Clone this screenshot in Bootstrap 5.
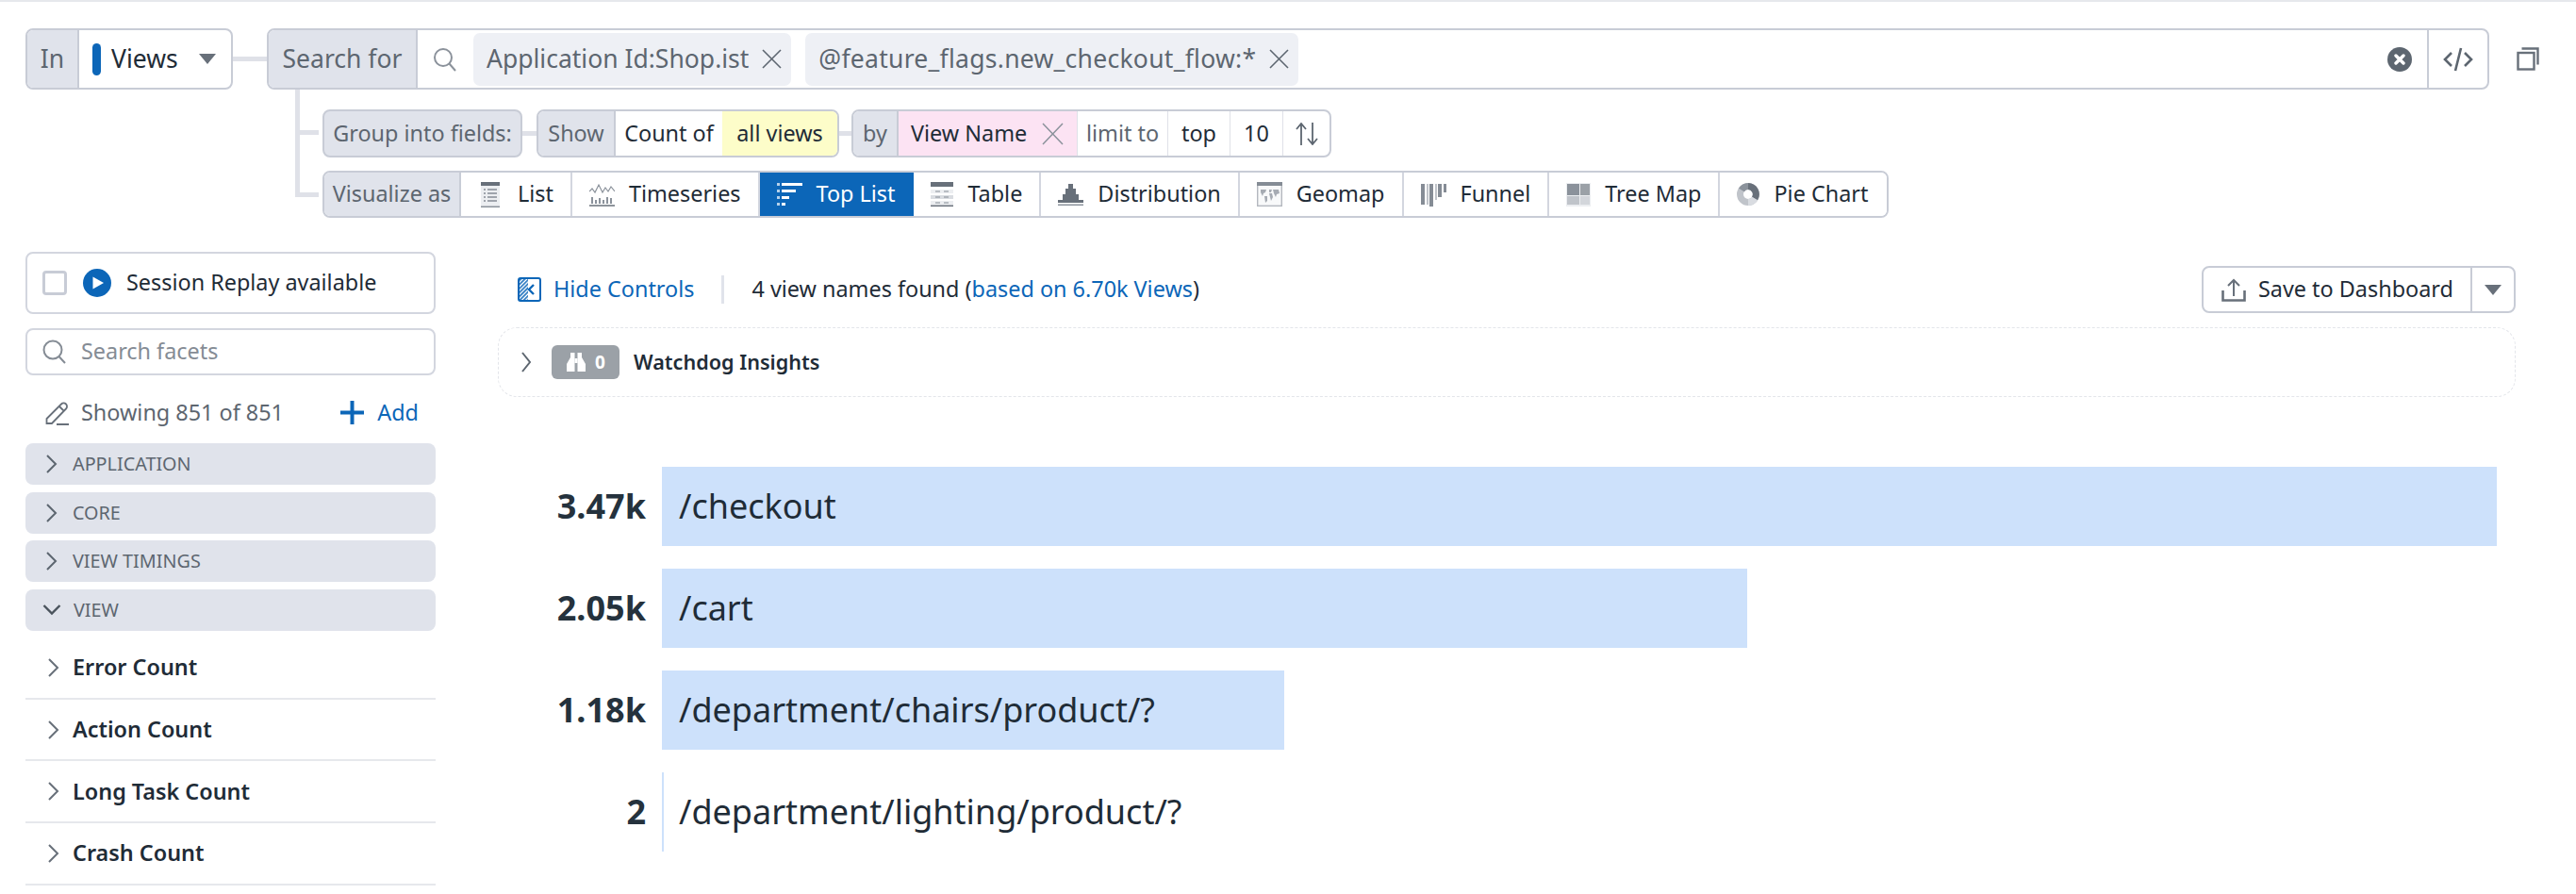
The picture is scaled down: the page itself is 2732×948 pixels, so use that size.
<!DOCTYPE html>
<html lang="en">
<head>
    <meta charset="UTF-8" />
    <title>Views Explorer</title>
    <link href="https://cdn.jsdelivr.net/npm/bootstrap@5.3.3/dist/css/bootstrap.min.css" rel="stylesheet" />
    <style>
        html, body { background: #fff; }
        body { font-family: "Noto Sans", sans-serif; font-size: 23.4px; color: #1f2c37; border-top: 2px solid #e6e8ec; width: 2732px; height: 946px; overflow: hidden; }
        a { text-decoration: none; color: #0c66b8; }
        svg { display: block; flex: none; }

        /* query builder */
        .query-wrap { padding: 28px 0 0 27px; }
        .query-row { height: 65px; font-size: 26.5px; }
        .seg { border: 2px solid #c8ccd6; border-radius: 8px; overflow: hidden; background: #fff; }
        .seg-label { background: #e0e3eb; color: #5d6670; border-right: 2px solid #c8ccd6; }
        .seg-in { width: 220px; height: 65px; }
        .seg-in .seg-label { width: 55px; }
        .view-dot { width: 9px; height: 34px; background: #0c66b8; border-radius: 5px; margin: 0 11px 0 14px; }
        .caret { width: 0; height: 0; border-left: 9.5px solid transparent; border-right: 9.5px solid transparent; border-top: 11px solid #68707a; }
        .hline { height: 5px; background: #dfe1e8; }
        .seg-search { width: 2357px; height: 65px; }
        .seg-search .seg-label { width: 158px; }
        .search-ico { margin: 0 17px 0 16px; }
        .pill { height: 56px; background: #eef0f5; border-radius: 7px; color: #5d6670; padding: 0 10px 0 14px; gap: 14px; }
        .pill + .pill { margin-left: 15px; letter-spacing: .27px; }
        .code-btn { width: 64px; border-left: 2px solid #c8ccd6; height: 100%; }

        .tree { margin-left: 286px; position: relative; }
        .tree-v { width: 5px; height: 114px; background: #dfe1e8; }
        .tree-rows { margin-left: 24px; padding-top: 21px; gap: 14px; }
        .group-row { height: 51px; position: relative; }
        .viz-row { height: 50px; }
        .stub { position: absolute; left: -24px; width: 20px; height: 5px; background: #dfe1e8; }
        .g-plain { border-left: 1px solid #dfe1e8; }
        .bg-flag { background: #fdfdc9; color: #1f2c37; }
        .bg-name { background: #fce3f3; }
        .muted-txt { color: #5d6670; }
        .viz-row .seg-label { width: 145px; height: 100%; }
        .viz-btn { font-size: 23.4px; border: 0; border-right: 2px solid #d3d6df; border-radius: 0; padding: 0 18px; gap: 15px; height: 100%; color: #1f2c37; display: flex; align-items: center; background: #fff; white-space: nowrap; }
        .viz-row .seg .btn-group > .btn.viz-btn { margin-left: 0; }
        .viz-btn:last-child { border-right: 0; padding-right: 20px; }
        .viz-btn.on { background: #0c66b8; color: #fff; border-color: #0c66b8; }

        /* page body */
        .page-cols { margin-top: 36px; padding-left: 27px; }
        .side { width: 435px; flex: none; }
        .replay-box { height: 66px; border: 2px solid #d3d6df; border-radius: 8px; padding-left: 16px; }
        .check-box { width: 26px; height: 26px; border: 3px solid #c8ccd6; border-radius: 4px; }
        .facet-search { height: 50px; border: 2px solid #d3d6df; border-radius: 8px; padding-left: 16px; margin-top: 15px; color: #858c95; gap: 16px; }
        .show-row { height: 36px; margin-top: 22px; padding: 0 18px 0 21px; color: #5d6670; margin-bottom: 14px; }
        .facet-head { height: 44px; background: #e0e3eb; border-radius: 8px; padding-left: 20px; font-size: 19.8px; color: #5d6670; margin-bottom: 7.5px; gap: 15px; }
        .facet-item { height: 65.7px; border-bottom: 2px solid #e6e8ec; padding-left: 22px; font-weight: 600; gap: 13px; }
        .main-col { width: 2140px; margin-left: 66px; flex: none; }
        .main-head { height: 50px; margin-top: 15px; }
        .v-sep { width: 3px; height: 30px; background: #e0e3eb; margin: 0 29px; }
        .save-btn { height: 50px; width: 333px; border: 2px solid #c8ccd6; border-radius: 8px; }
        .save-main { width: 283px; height: 100%; padding-left: 19px; gap: 13px; }
        .save-drop { flex: 1; height: 100%; border-left: 2px solid #c8ccd6; }
        .insights { height: 74px; margin-top: 15px; border: 1.5px dashed #e3e5ea; border-radius: 20px; padding-left: 23px; font-weight: 600; font-size: 21.6px; }
        .dog-badge { width: 72px; height: 36px; border-radius: 6px; background: #9ba1a7; color: #fff; margin: 0 15px 0 21px; font-size: 19px; font-weight: 700; gap: 9px; }

        .toplist { margin-top: 74px; gap: 24px; }
        .top-row { height: 84px; }
        .top-val { width: 157px; padding-right: 17px; text-align: right; font-size: 36px; font-weight: 700; color: #25323d; flex: none; margin-left: 17px; }
        .top-track { width: 1948px; height: 84px; position: relative; border-left: 2px solid #cde1fb; }
        .top-bar { background: #cde1fb; height: 100%; margin-left: -2px; }
        .top-name { position: absolute; left: 16px; top: 0; height: 84px; font-size: 36px; color: #1f2c37; }
    </style>
</head>
<body>
    <div class="query-wrap">
        <div class="query-row d-flex align-items-center">
            <div class="seg seg-in d-flex align-items-center">
                <div class="seg-label h-100 d-flex align-items-center justify-content-center">In</div>
                <div class="view-dot"></div>
                <div>Views</div>
                <div class="caret ms-auto me-3"></div>
            </div>
            <div class="hline" style="width: 36px"></div>
            <div class="seg seg-search d-flex align-items-center">
                <div class="seg-label h-100 d-flex align-items-center justify-content-center">Search for</div>
                <svg class="search-ico" width="26" height="26" viewBox="0 0 26 26" fill="none" stroke="#8b929b" stroke-width="2"><circle cx="11" cy="11" r="9"/><path d="M17.5 17.5 24 25"/></svg>
                <div class="pill d-flex align-items-center">Application Id:Shop.ist
                    <svg width="21" height="21" viewBox="0 0 21 21" stroke="#5d6670" stroke-width="1.6"><path d="M1 1l19 19M20 1 1 20"/></svg>
                </div>
                <div class="pill d-flex align-items-center">@feature_flags.new_checkout_flow:*
                    <svg width="21" height="21" viewBox="0 0 21 21" stroke="#5d6670" stroke-width="1.6"><path d="M1 1l19 19M20 1 1 20"/></svg>
                </div>
                <svg class="ms-auto" style="margin-right: 16px" width="26" height="26" viewBox="0 0 26 26"><circle cx="13" cy="13" r="13" fill="#5d6670"/><path d="M9 9l8 8M17 9l-8 8" stroke="#fff" stroke-width="3.4" stroke-linecap="round"/></svg>
                <div class="code-btn d-flex align-items-center justify-content-center">
                    <svg width="32" height="26" viewBox="0 0 32 26" fill="none" stroke="#5d6670" stroke-width="2.6"><path d="M9 6 2 13l7 7M23 6l7 7-7 7M19 1l-6 24"/></svg>
                </div>
            </div>
            <svg style="margin-left: 29px" width="24" height="25" viewBox="0 0 24 25" fill="none" stroke="#68707a" stroke-width="2.4"><rect x="1.5" y="6" width="17" height="17.5"/><path d="M5.5 1.5h17v17"/></svg>
        </div>

        <div class="tree d-flex">
            <div class="tree-v"></div>
            <div class="tree-rows d-flex flex-column">
                <div class="group-row d-flex align-items-center">
                    <span class="stub" style="top: 22px"></span>
                    <div class="seg d-flex align-items-center h-100 muted-txt" style="width: 212px; background: #e0e3eb">
                        <div class="w-100 text-center">Group into fields:</div>
                    </div>
                    <div class="hline" style="width: 15px"></div>
                    <div class="seg d-flex align-items-center h-100" style="width: 321px">
                        <div class="seg-label h-100 d-flex align-items-center justify-content-center" style="width: 82px">Show</div>
                        <div class="flex-grow-1 text-center">Count of</div>
                        <div class="bg-flag h-100 d-flex align-items-center justify-content-center" style="width: 122px">all views</div>
                    </div>
                    <div class="hline" style="width: 13px"></div>
                    <div class="seg d-flex align-items-center h-100" style="width: 509px">
                        <div class="seg-label h-100 d-flex align-items-center justify-content-center" style="width: 48px">by</div>
                        <div class="bg-name h-100 d-flex align-items-center justify-content-between" style="width: 189px; padding: 0 14px 0 13px">View Name
                            <svg width="23" height="24" viewBox="0 0 23 24" stroke="#8b929b" stroke-width="1.5"><path d="M1 1l21 22M22 1 1 23"/></svg>
                        </div>
                        <div class="g-plain h-100 d-flex align-items-center justify-content-center muted-txt" style="width: 96px">limit to</div>
                        <div class="g-plain h-100 d-flex align-items-center justify-content-center" style="width: 66px">top</div>
                        <div class="g-plain h-100 d-flex align-items-center justify-content-center" style="width: 56px">10</div>
                        <div class="g-plain h-100 flex-grow-1 d-flex align-items-center justify-content-center">
                            <svg width="26" height="24" viewBox="0 0 26 24" fill="none" stroke="#5d6670" stroke-width="1.8"><path d="M7 24V2M2 7l5-6 5 6M19 0v22M14 17l5 6 5-6"/></svg>
                        </div>
                    </div>
                </div>
                <div class="viz-row d-flex align-items-center position-relative">
                    <span class="stub" style="top: 23px"></span>
                    <div class="seg d-flex align-items-center h-100">
                        <div class="seg-label d-flex align-items-center justify-content-center">Visualize as</div>
                        <div class="btn-group h-100" role="group">
                            <button type="button" class="btn viz-btn" style="padding-left: 21px; gap: 19px">
                                <svg width="20" height="27" viewBox="0 0 20 27"><rect x="0" y="0" width="20" height="27" fill="#eceef1"/><rect x="0" y="0" width="20" height="4" fill="#68707a"/><rect x="0" y="25.5" width="20" height="1.5" fill="#8b929b"/><path d="M3 8h2M7 8h10M3 12h2M7 12h10M3 16h2M7 16h10M3 20h2M7 20h10" stroke="#858c95" stroke-width="1.4"/></svg>
                                List</button>
                            <button type="button" class="btn viz-btn">
                                <svg width="27" height="26" viewBox="0 0 27 26" fill="none"><path d="M0 10l3-3 3 4 4-8 4 8 3-5 3 4 3-5 4 5" stroke="#8b929b" stroke-width="1.2"/><path d="M3 16v7M7 19v4M11 17v6M15 19v4M19 16v7M23 17v6" stroke="#8b929b" stroke-width="2"/><path d="M0 25h27" stroke="#68707a" stroke-width="1.6"/></svg>
                                Timeseries</button>
                            <button type="button" class="btn viz-btn on">
                                <svg width="27" height="26" viewBox="0 0 27 26" fill="#fff"><rect x="0" y="1" width="3" height="3" opacity=".7"/><rect x="5" y="1" width="22" height="3"/><rect x="0" y="8" width="3" height="3" opacity=".7"/><rect x="5" y="8" width="15" height="3"/><rect x="0" y="15" width="3" height="3" opacity=".7"/><rect x="5" y="15" width="8" height="3"/><rect x="0" y="22" width="3" height="3" opacity=".7"/><rect x="5" y="22" width="4" height="3"/></svg>
                                Top List</button>
                            <button type="button" class="btn viz-btn">
                                <svg width="24" height="26" viewBox="0 0 24 26"><rect width="24" height="5" fill="#68707a"/><rect y="8" width="24" height="4" fill="#eceef1"/><rect y="14" width="24" height="4" fill="#d9dce1"/><rect y="20" width="24" height="4" fill="#eceef1"/><path d="M5 10h5M14 10h5M5 16h5M14 16h5M5 22h5M14 22h5" stroke="#858c95" stroke-width="1"/><rect y="24.500" width="24" height="1.500" fill="#68707a"/></svg>
                                Table</button>
                            <button type="button" class="btn viz-btn">
                                <svg width="27" height="24" viewBox="0 0 27 24"><path d="M11 1h5v5h3v6h3v6h5v3H0v-3h5v-6h3V6h3z" fill="#68707a"/><rect y="22.500" width="27" height="1.500" fill="#8b929b"/></svg>
                                Distribution</button>
                            <button type="button" class="btn viz-btn">
                                <svg width="27" height="26" viewBox="0 0 27 26"><rect x=".7" y=".7" width="25.600" height="24.600" fill="#f8f9fa" stroke="#b4b8bf" stroke-width="1.400"/><rect width="27" height="4" fill="#858c95"/><path d="M4 8h6l-1 3-2 1-1 3-2-4zM8 15h3v5l-2 2zM13 8h3l-1 3h-2zM13 12h3l1 4-2 4-1-4zM17 8h6l1 4-3 1-1 3-2-4z" fill="#a6abb3"/></svg>
                                Geomap</button>
                            <button type="button" class="btn viz-btn">
                                <svg width="27" height="26" viewBox="0 0 27 26"><path d="M0 2h4v22H0z" fill="#858c95"/><path d="M6 2h2v22H6z" fill="#c0c4ca"/><path d="M9 2h4v24H9z" fill="#858c95"/><path d="M15 2h2v17h-2z" fill="#c0c4ca"/><path d="M18 2h4v14h-4z" fill="#858c95"/><path d="M24 2h3v9h-3z" fill="#858c95"/></svg>
                                Funnel</button>
                            <button type="button" class="btn viz-btn">
                                <svg width="26" height="25" viewBox="0 0 26 25"><rect width="26" height="25" fill="#eceef1"/><rect x="1" y="1" width="13" height="12" fill="#8b929b"/><rect x="15" y="1" width="10" height="12" fill="#9ba1a7"/><rect x="1" y="14" width="13" height="9" fill="#c0c4ca"/><rect x="15" y="14" width="10" height="9" fill="#d3d6db"/></svg>
                                Tree Map</button>
                            <button type="button" class="btn viz-btn">
                                <svg width="24" height="26" viewBox="0 0 24 26" fill="none" stroke-width="7"><circle cx="12" cy="13" r="8.500" stroke="#c0c4ca"/><path d="M12 4.500a8.500 8.500 0 0 1 7 13" stroke="#68707a"/><path d="M19 17.500a8.500 8.500 0 0 1-7 4" stroke="#d9dce1"/><path d="M12 4.500a8.500 8.500 0 0 0-7 4" stroke="#8b929b"/></svg>
                                Pie Chart</button>
                        </div>
                    </div>
                </div>
            </div>
        </div>
    </div>

    <div class="page-cols d-flex">
        <div class="side">
            <div class="replay-box d-flex align-items-center">
                <div class="check-box"></div>
                <svg style="margin: 0 16px 0 17px" width="30" height="30" viewBox="0 0 30 30"><circle cx="15" cy="15" r="15" fill="#0c66b8"/><path d="M10.500 8.500 22 15l-11.500 6.500z" fill="#fff"/></svg>
                Session Replay available
            </div>
            <div class="facet-search d-flex align-items-center">
                <svg width="25" height="26" viewBox="0 0 25 26" fill="none" stroke="#858c95" stroke-width="2"><circle cx="11" cy="11" r="9.500"/><path d="M17.500 18 24 25"/></svg>
                Search facets
            </div>
            <div class="show-row d-flex align-items-center">
                <svg style="margin-right: 12px" width="26" height="26" viewBox="0 0 26 26" fill="none" stroke="#68707a" stroke-width="1.800"><path d="M1.500 19 17 3.500a3 3 0 0 1 5 5L7 24H1.500zM15 6l5 5M12 25h13"/></svg>
                Showing 851 of 851
                <a href="#" class="ms-auto d-flex align-items-center">
                    <svg style="margin-right: 14px" width="25" height="25" viewBox="0 0 25 25" fill="#0c66b8"><path d="M10.500 0h4v10.500H25v4H14.500V25h-4V14.500H0v-4h10.500z"/></svg>
                    Add</a>
            </div>
            <div class="facet-head d-flex align-items-center">
                <svg width="15" height="20" viewBox="0 0 15 20" fill="none" stroke="#5d6670" stroke-width="2"><path d="M3 1l9 9-9 9"/></svg>APPLICATION</div>
            <div class="facet-head d-flex align-items-center">
                <svg width="15" height="20" viewBox="0 0 15 20" fill="none" stroke="#5d6670" stroke-width="2"><path d="M3 1l9 9-9 9"/></svg>CORE</div>
            <div class="facet-head d-flex align-items-center">
                <svg width="15" height="20" viewBox="0 0 15 20" fill="none" stroke="#5d6670" stroke-width="2"><path d="M3 1l9 9-9 9"/></svg>VIEW TIMINGS</div>
            <div class="facet-head d-flex align-items-center" style="padding-left: 18px; gap: 13px">
                <svg width="20" height="15" viewBox="0 0 20 15" fill="none" stroke="#4a535c" stroke-width="2.400"><path d="M1.500 3l8.500 8.500L18.500 3"/></svg>VIEW</div>
            <div class="facet-item d-flex align-items-center">
                <svg width="15" height="20" viewBox="0 0 15 20" fill="none" stroke="#68707a" stroke-width="2"><path d="M3 1l9 9-9 9"/></svg>Error Count</div>
            <div class="facet-item d-flex align-items-center">
                <svg width="15" height="20" viewBox="0 0 15 20" fill="none" stroke="#68707a" stroke-width="2"><path d="M3 1l9 9-9 9"/></svg>Action Count</div>
            <div class="facet-item d-flex align-items-center">
                <svg width="15" height="20" viewBox="0 0 15 20" fill="none" stroke="#68707a" stroke-width="2"><path d="M3 1l9 9-9 9"/></svg>Long Task Count</div>
            <div class="facet-item d-flex align-items-center">
                <svg width="15" height="20" viewBox="0 0 15 20" fill="none" stroke="#68707a" stroke-width="2"><path d="M3 1l9 9-9 9"/></svg>Crash Count</div>
        </div>

        <div class="main-col">
            <div class="main-head d-flex align-items-center">
                <a href="#" class="d-flex align-items-center" style="margin-left: 21px; gap: 13px">
                    <svg width="25" height="26" viewBox="0 0 25 26" fill="none"><defs><pattern id="hatch" width="3" height="3" patternUnits="userSpaceOnUse" patternTransform="rotate(45)"><rect width="1.500" height="3" fill="#0c66b8"/></pattern></defs><rect x="1" y="1" width="10" height="24" fill="url(#hatch)"/><rect x="1" y="1" width="23" height="24" rx="2" stroke="#0c66b8" stroke-width="2"/><path d="M17 8l-5 5 5 5" stroke="#0c66b8" stroke-width="2.400"/></svg>
                    Hide Controls</a>
                <div class="v-sep"></div>
                <div>4 view names found (<a href="#">based on 6.70k Views</a>)</div>
                <div class="save-btn d-flex align-items-center ms-auto">
                    <div class="save-main d-flex align-items-center">
                        <svg width="26" height="25" viewBox="0 0 26 25" fill="none" stroke="#68707a"><path d="M13 19V2M7 8l6-6 6 6" stroke-width="2"/><path d="M1.500 13v10.500h23V13" stroke-width="2.600"/></svg>
                        Save to Dashboard
                    </div>
                    <div class="save-drop d-flex align-items-center justify-content-center"><div class="caret"></div></div>
                </div>
            </div>
            <div class="insights d-flex align-items-center">
                <svg width="12" height="24" viewBox="0 0 12 24" fill="none" stroke="#5d6670" stroke-width="2"><path d="M2 2l8 10-8 10"/></svg>
                <div class="dog-badge d-flex align-items-center justify-content-center">
                    <svg width="22" height="22" viewBox="0 0 22 22" fill="#fff"><path d="M5 1h4.500v20H1v-8l4-7zM12.500 1H17v5l4 7v8h-8.500z"/><rect x="9.500" y="7" width="3" height="5"/></svg>
                    0
                </div>
                Watchdog Insights
            </div>

            <div class="toplist d-flex flex-column">
                <div class="top-row d-flex align-items-center">
                    <div class="top-val">3.47k</div>
                    <div class="top-track"><div class="top-bar" style="width: 100%"></div><div class="top-name d-flex align-items-center">/checkout</div></div>
                </div>
                <div class="top-row d-flex align-items-center">
                    <div class="top-val">2.05k</div>
                    <div class="top-track"><div class="top-bar" style="width: 59.15%"></div><div class="top-name d-flex align-items-center">/cart</div></div>
                </div>
                <div class="top-row d-flex align-items-center">
                    <div class="top-val">1.18k</div>
                    <div class="top-track"><div class="top-bar" style="width: 33.9%"></div><div class="top-name d-flex align-items-center">/department/chairs/product/?</div></div>
                </div>
                <div class="top-row d-flex align-items-center">
                    <div class="top-val">2</div>
                    <div class="top-track"><div class="top-name d-flex align-items-center">/department/lighting/product/?</div></div>
                </div>
            </div>
        </div>
    </div>

    <script src="https://cdn.jsdelivr.net/npm/bootstrap@5.3.3/dist/js/bootstrap.bundle.min.js"></script>
</body>
</html>
